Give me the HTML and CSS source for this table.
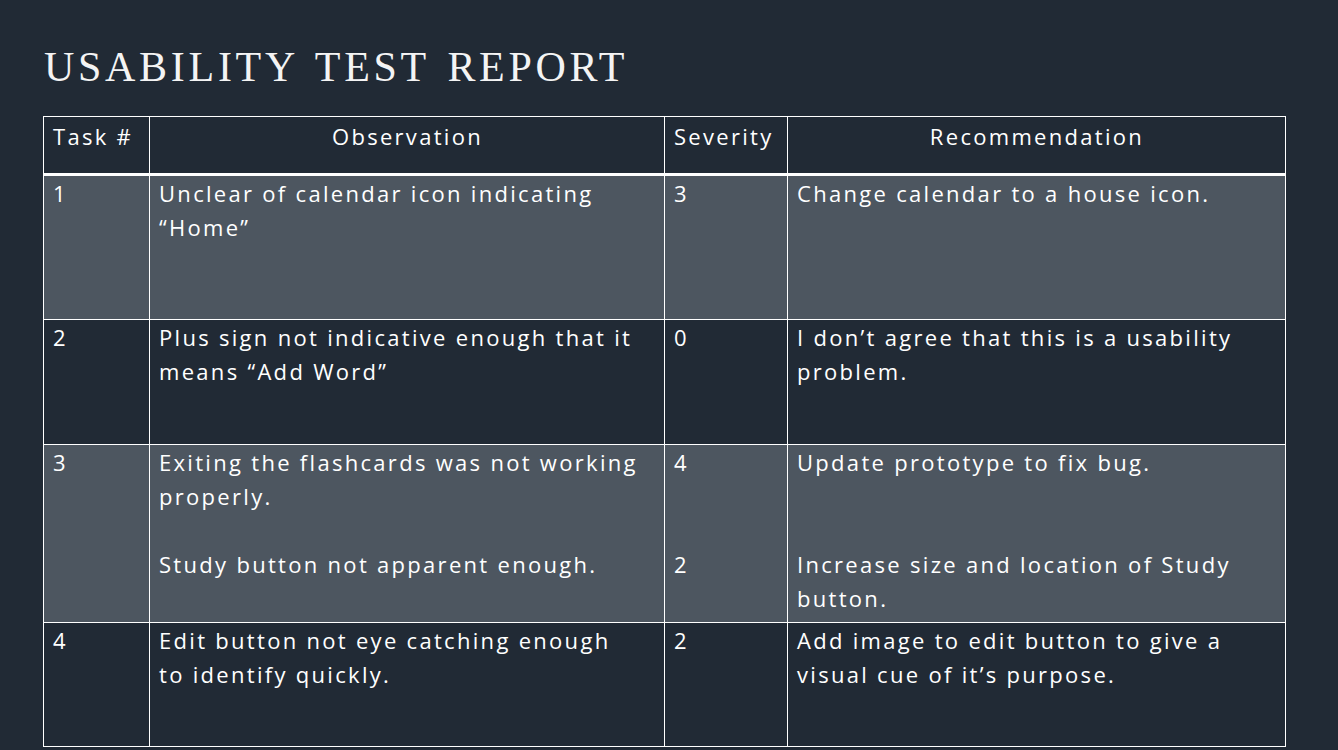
FILE: index.html
```html
<!DOCTYPE html>
<html>
<head>
<meta charset="utf-8">
<link rel="stylesheet" href="styles.css">
</head>
<body>
<div class="slide">
  <h1 class="title">USABILITY TEST REPORT</h1>
  <div class="report">
    <div class="cell head">Task #</div>
    <div class="cell head center">Observation</div>
    <div class="cell head">Severity</div>
    <div class="cell head center">Recommendation</div>

    <div class="cell r1 alt">1</div>
    <div class="cell r1 alt">Unclear of calendar icon indicating<br>“Home”</div>
    <div class="cell r1 alt">3</div>
    <div class="cell r1 alt">Change calendar to a house icon.</div>

    <div class="cell r2">2</div>
    <div class="cell r2">Plus sign not indicative enough that it<br>means “Add Word”</div>
    <div class="cell r2">0</div>
    <div class="cell r2">I don’t agree that this is a usability<br>problem.</div>

    <div class="cell r3 alt">3</div>
    <div class="cell r3 alt">Exiting the flashcards was not working<br>properly.<br><br>Study button not apparent enough.</div>
    <div class="cell r3 alt">4<br><br><br>2</div>
    <div class="cell r3 alt">Update prototype to fix bug.<br><br><br>Increase size and location of Study<br>button.</div>

    <div class="cell r4">4</div>
    <div class="cell r4">Edit button not eye catching enough<br>to identify quickly.</div>
    <div class="cell r4">2</div>
    <div class="cell r4">Add image to edit button to give a<br>visual cue of it’s purpose.</div>
  </div>
</div>
</body>
</html>
```

FILE: styles.css
```css
html, body {
  margin: 0;
  padding: 0;
  background: #212a35;
}

.slide {
  width: 1338px;
  height: 750px;
  box-sizing: border-box;
  padding: 43px 0 0 43px;
  overflow: hidden;
  background: #212a35;
  color: #ffffff;
}

.title {
  margin: 0 0 24px 1px;
  height: 49px;
  font-family: "Liberation Serif", serif;
  font-weight: normal;
  font-size: 42px;
  line-height: 49px;
  letter-spacing: 3.7px;
  word-spacing: 4px;
  color: #f4f4f4;
}

.report {
  display: grid;
  grid-template-columns: 106px 515px 123px 498px;
  grid-template-rows: 59px 144px 125px 178px 124px;
  width: 1243px;
  box-sizing: border-box;
  border-left: 1px solid #ffffff;
  border-top: 1px solid #ffffff;
  font-family: "Open Sans", sans-serif;
  font-size: 22px;
  line-height: 34px;
  letter-spacing: 2.3px;
}

.cell {
  box-sizing: border-box;
  border-right: 1px solid #ffffff;
  border-bottom: 1px solid #ffffff;
  padding: 0 8px 0 9px;
  white-space: nowrap;
}

.head {
  border-bottom-width: 3px;
  padding-top: 2px;
  letter-spacing: 2.3px;
}

.center {
  text-align: center;
}

.alt {
  background: #4d5660;
}
```
